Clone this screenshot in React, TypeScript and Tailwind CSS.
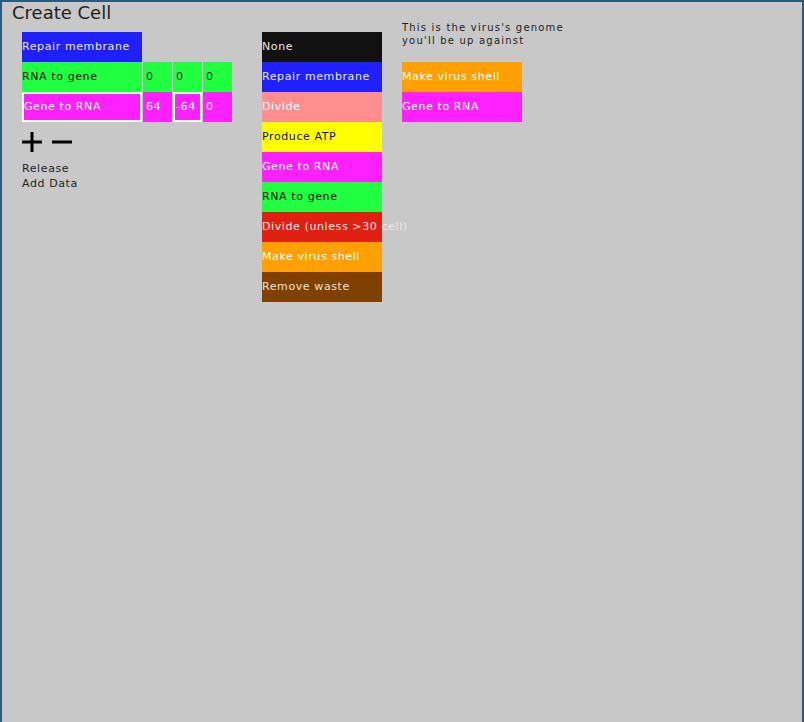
import { Fragment } from "react";

type Gene = { label: string; bg: string; fg: string };

const FONT = "font-['DejaVu_Sans',sans-serif]";

const palette: Gene[] = [
  { label: "None", bg: "bg-[#111111]", fg: "text-[#e8e8e8]" },
  { label: "Repair membrane", bg: "bg-[#2020ff]", fg: "text-[#e6e6ff]" },
  { label: "Divide", bg: "bg-[#ff8f8f]", fg: "text-white" },
  { label: "Produce ATP", bg: "bg-[#ffff00]", fg: "text-[#111111]" },
  { label: "Gene to RNA", bg: "bg-[#ff20ff]", fg: "text-white" },
  { label: "RNA to gene", bg: "bg-[#20ff40]", fg: "text-[#111111]" },
  { label: "Divide (unless >30 cell)", bg: "bg-[#e02010]", fg: "text-[#f4e4e4]" },
  { label: "Make virus shell", bg: "bg-[#ffa000]", fg: "text-white" },
  { label: "Remove waste", bg: "bg-[#804000]", fg: "text-[#eee0d0]" },
];

const virus: Gene[] = [
  { label: "Make virus shell", bg: "bg-[#ffa000]", fg: "text-white" },
  { label: "Gene to RNA", bg: "bg-[#ff20ff]", fg: "text-white" },
];

type Row = { gene: Gene; values?: string[]; selected?: boolean; selectedValue?: number };

const cellGenome: Row[] = [
  { gene: { label: "Repair membrane", bg: "bg-[#2020ff]", fg: "text-[#e6e6ff]" } },
  { gene: { label: "RNA to gene", bg: "bg-[#20ff40]", fg: "text-[#111111]" }, values: ["0", "0", "0"] },
  {
    gene: { label: "Gene to RNA", bg: "bg-[#ff20ff]", fg: "text-white" },
    values: ["64", "-64", "0"],
    selected: true,
    selectedValue: 1,
  },
];

function GeneCell({ gene }: { gene: Gene }) {
  return (
    <div
      className={`h-[30px] w-[120px] pt-px ${gene.bg} ${gene.fg} flex items-center text-[11px] tracking-[0.6px] whitespace-nowrap`}
    >
      {gene.label}
    </div>
  );
}

export default function App() {
  return (
    <div className={`w-[804px] h-[722px] bg-[#c8c8c8] border-t-2 border-l-2 border-r-2 border-[#2b5a7f] ${FONT} overflow-hidden`}>
      <h1 className="pl-[10px] h-[30px] text-[18px] leading-[22px] text-[#1e1e1e]">Create Cell</h1>

      <div className="flex items-start pl-[20px]">
        {/* Current cell genome */}
        <div className="w-[240px] flex flex-col">
          {cellGenome.map((row, i) => (
            <div key={i} className="flex h-[30px]">
              <div
                className={`w-[120px] h-[30px] pt-px ${row.gene.bg} ${row.gene.fg} flex items-center text-[11px] tracking-[0.6px] whitespace-nowrap ${
                  row.selected ? "border-2 border-white pl-0" : ""
                }`}
              >
                {row.gene.label}
              </div>
              {row.values?.map((v, j) => (
                <Fragment key={j}>
                  <div
                    className={`ml-px w-[29px] h-[30px] pt-px ${row.gene.bg} ${row.gene.fg} flex items-center text-[11px] tracking-[0.6px] ${
                      row.selectedValue === j ? "border-2 border-white pl-px" : "pl-[3px]"
                    }`}
                  >
                    {v}
                  </div>
                </Fragment>
              ))}
            </div>
          ))}

          <div className="flex items-center gap-[10px] mt-[10px] h-[20px]">
            <svg width="20" height="20" viewBox="0 0 20 20">
              <rect x="0" y="8.5" width="20" height="3" fill="#000" />
              <rect x="8.5" y="0" width="3" height="20" fill="#000" />
            </svg>
            <svg width="20" height="20" viewBox="0 0 20 20">
              <rect x="0" y="8.5" width="20" height="3" fill="#000" />
            </svg>
          </div>

          <div className="mt-[9px] text-[11px] leading-[15px] tracking-[0.6px] text-[#1e1e1e]">
            <div>Release</div>
            <div>Add Data</div>
          </div>
        </div>

        {/* Gene palette */}
        <div className="w-[120px] flex flex-col">
          {palette.map((g, i) => (
            <GeneCell key={i} gene={g} />
          ))}
        </div>

        {/* Virus genome */}
        <div className="ml-[20px] -mt-[12px] flex flex-col">
          <div className="h-[42px] pt-[1px] text-[10px] leading-[13px] tracking-[1.2px] text-[#1e1e1e]">
            <div>This is the virus's genome</div>
            <div>you'll be up against</div>
          </div>
          {virus.map((g, i) => (
            <GeneCell key={i} gene={g} />
          ))}
        </div>
      </div>
    </div>
  );
}
